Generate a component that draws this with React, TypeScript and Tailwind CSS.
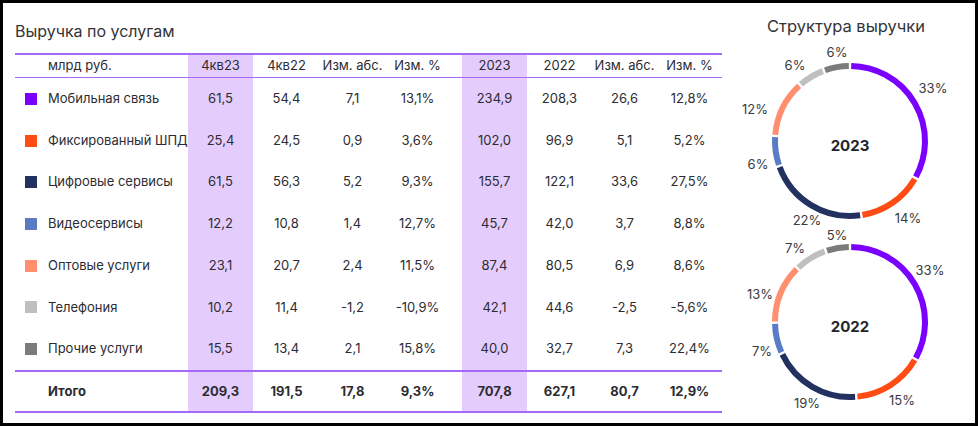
import React from "react";

type Row = { name: string; swatch: string; values: string[] };

const rows: Row[] = [
  { name: "Мобильная связь", swatch: "bg-[#7a00ff]", values: ["61,5", "54,4", "7,1", "13,1%", "234,9", "208,3", "26,6", "12,8%"] },
  { name: "Фиксированный ШПД", swatch: "bg-[#ff4b14]", values: ["25,4", "24,5", "0,9", "3,6%", "102,0", "96,9", "5,1", "5,2%"] },
  { name: "Цифровые сервисы", swatch: "bg-[#233160]", values: ["61,5", "56,3", "5,2", "9,3%", "155,7", "122,1", "33,6", "27,5%"] },
  { name: "Видеосервисы", swatch: "bg-[#5a7cc6]", values: ["12,2", "10,8", "1,4", "12,7%", "45,7", "42,0", "3,7", "8,8%"] },
  { name: "Оптовые услуги", swatch: "bg-[#ff8f6e]", values: ["23,1", "20,7", "2,4", "11,5%", "87,4", "80,5", "6,9", "8,6%"] },
  { name: "Телефония", swatch: "bg-[#bfbfbf]", values: ["10,2", "11,4", "-1,2", "-10,9%", "42,1", "44,6", "-2,5", "-5,6%"] },
  { name: "Прочие услуги", swatch: "bg-[#7b7b7b]", values: ["15,5", "13,4", "2,1", "15,8%", "40,0", "32,7", "7,3", "22,4%"] },
];

const totals = ["209,3", "191,5", "17,8", "9,3%", "707,8", "627,1", "80,7", "12,9%"];
const headers = ["4кв23", "4кв22", "Изм. абс.", "Изм. %", "2023", "2022", "Изм. абс.", "Изм. %"];

const grid = "grid grid-cols-[173px_65px_67px_65px_65px_12px_65px_65px_65px_65px]";
const hl = "bg-[#e4cdfd]";

function Cells({ values }: { values: string[] }) {
  return (
    <>
      {values.map((v, i) => {
        const isHl = i === 0 || i === 4;
        return (
          <React.Fragment key={i}>
            {i === 4 && <div />}
            <div className={`flex items-center justify-center whitespace-nowrap ${isHl ? hl : ""}`}>{v}</div>
          </React.Fragment>
        );
      })}
    </>
  );
}

const colors = ["#7a00ff", "#ff4b14", "#233160", "#5a7cc6", "#ff8f6e", "#bfbfbf", "#7b7b7b"];

function arc(cx: number, cy: number, r: number, a0: number, a1: number) {
  const p = (a: number) => {
    const rad = (a * Math.PI) / 180;
    return [cx + r * Math.sin(rad), cy - r * Math.cos(rad)];
  };
  const [x0, y0] = p(a0);
  const [x1, y1] = p(a1);
  const large = a1 - a0 > 180 ? 1 : 0;
  return `M ${x0} ${y0} A ${r} ${r} 0 ${large} 1 ${x1} ${y1}`;
}

function Donut({ cy, data, year, labels }: { cy: number; data: number[]; year: string; labels: [string, number, number][] }) {
  const total = data.reduce((a, b) => a + b, 0);
  let acc = 0;
  const gap = 0.9;
  return (
    <g>
      {data.map((d, i) => {
        const a0 = (acc / total) * 360;
        acc += d;
        const a1 = (acc / total) * 360;
        return <path key={i} d={arc(110, cy, 75, a0 + gap, a1 - gap)} stroke={colors[i]} strokeWidth={6} fill="none" />;
      })}
      <text x={110} y={cy + 4} textAnchor="middle" dominantBaseline="central" fontSize={15} fontWeight={700} fill="#22252b">
        {year}
      </text>
      {labels.map(([t, x, y], i) => (
        <text key={i} x={x - 740} y={y - 38} textAnchor="middle" dominantBaseline="central" fontSize={13} fill="#3a3a40">
          {t}
        </text>
      ))}
    </g>
  );
}

export default function App() {
  return (
    <div className="w-[978px] h-[426px] border-[3px] border-black bg-white flex text-[#2c2c32] font-['Inter',sans-serif] overflow-hidden">
      <div className="w-[737px] pl-[12px] pt-[16px]">
        <div className="h-[24px] text-[16px] leading-[24px] text-[#333338]">Выручка по услугам</div>
        <div className="mt-[10px] w-[707px] text-[13px]">
          <div className={`${grid} h-[25px] border-t-2 border-b-[1.5px] border-[#a469f7]`}>
            <div className="flex items-center pl-[33px]">млрд руб.</div>
            <Cells values={headers} />
          </div>
          {rows.map((r) => (
            <div key={r.name} className={`${grid} h-[41.7px]`}>
              <div className="flex items-center pl-[10px] gap-[11px] whitespace-nowrap">
                <span className={`w-[12px] h-[12px] shrink-0 ${r.swatch}`} />
                <span>{r.name}</span>
              </div>
              <Cells values={r.values} />
            </div>
          ))}
          <div className={`${grid} h-[43px] border-t-2 border-b-2 border-[#a469f7] font-bold`}>
            <div className="flex items-center pl-[33px]">Итого</div>
            <Cells values={totals} />
          </div>
        </div>
      </div>
      <div className="flex-1 flex flex-col">
        <div className="mt-[11px] w-[212px] h-[24px] text-center text-[16.5px] leading-[24px] text-[#333338]">Структура выручки</div>
        <svg width={232} height={385} className="font-['Inter',sans-serif]">
          <Donut
            cy={103}
            year="2023"
            data={[234.9, 102.0, 155.7, 45.7, 87.4, 42.1, 40.0]}
            labels={[
              ["33%", 933, 88],
              ["14%", 908, 218],
              ["22%", 807, 220],
              ["6%", 758, 164],
              ["12%", 755, 109],
              ["6%", 795, 65],
              ["6%", 837, 52],
            ]}
          />
          <Donut
            cy={284}
            year="2022"
            data={[208.3, 96.9, 122.1, 42.0, 80.5, 44.6, 32.7]}
            labels={[
              ["33%", 930, 270],
              ["15%", 902, 400],
              ["19%", 807, 403],
              ["7%", 762, 351],
              ["13%", 760, 294],
              ["7%", 795, 248],
              ["5%", 837, 235],
            ]}
          />
        </svg>
      </div>
    </div>
  );
}
